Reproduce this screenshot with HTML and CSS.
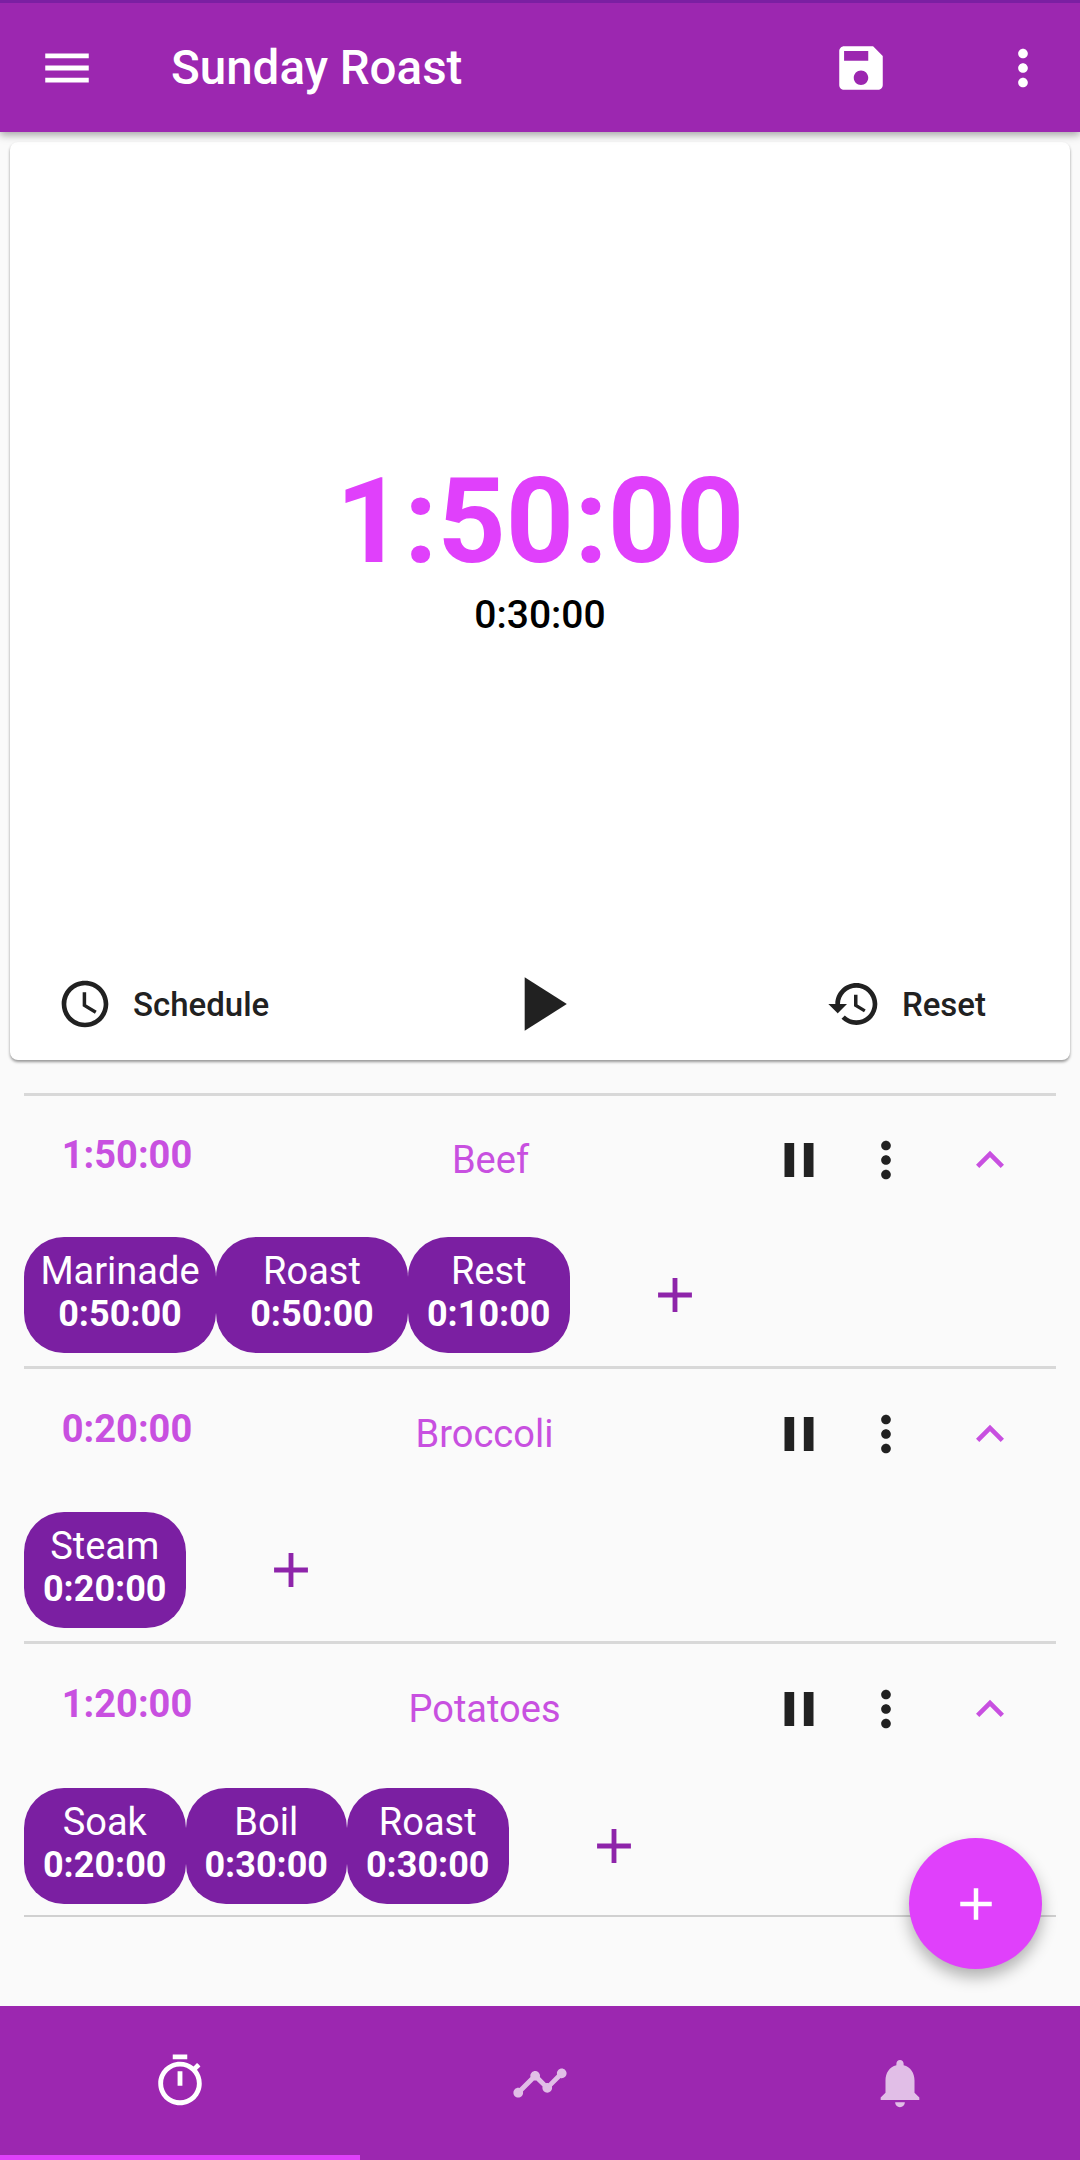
FILE: index.html
```html
<!DOCTYPE html>
<html lang="en">
<head>
    <meta charset="UTF-8">
    <meta name="viewport" content="width=device-width, initial-scale=1.0">
    <title>Sunday Roast</title>
    <link rel="stylesheet" href="styles.css">
</head>
<body>
    <svg class="defs" width="0" height="0">
        <symbol id="i-more" viewBox="0 0 24 24"><path d="M12 8c1.1 0 2-.9 2-2s-.9-2-2-2-2 .9-2 2 .9 2 2 2zm0 2c-1.1 0-2 .9-2 2s.9 2 2 2 2-.9 2-2-.9-2-2-2zm0 6c-1.1 0-2 .9-2 2s.9 2 2 2 2-.9 2-2-.9-2-2-2z"/></symbol>
        <symbol id="i-pause" viewBox="0 0 24 24"><path d="M6 19h4V5H6v14zm8-14v14h4V5h-4z"/></symbol>
        <symbol id="i-up" viewBox="0 0 24 24"><path d="M7.41 15.41 12 10.83l4.59 4.58L18 14l-6-6-6 6z"/></symbol>
        <symbol id="i-plus" viewBox="0 0 24 24"><path d="M19 13h-6v6h-2v-6H5v-2h6V5h2v6h6v2z"/></symbol>
    </svg>

    <!-- App bar -->
    <header class="app-bar">
        <svg class="icon bar-menu" viewBox="0 0 24 24"><path d="M3 18h18v-2H3v2zm0-5h18v-2H3v2zm0-7v2h18V6H3z"/></svg>
        <h1 class="bar-title">Sunday Roast</h1>
        <svg class="icon bar-save" viewBox="0 0 24 24"><path d="M17 3H5c-1.11 0-2 .9-2 2v14c0 1.1.89 2 2 2h14c1.1 0 2-.9 2-2V7l-4-4zm-5 16c-1.66 0-3-1.34-3-3s1.34-3 3-3 3 1.34 3 3-1.34 3-3 3zm3-10H5V5h10v4z"/></svg>
        <svg class="icon bar-more"><use href="#i-more"/></svg>
    </header>

    <!-- Timer card -->
    <section class="card">
        <div class="clock">
            <div class="clock-main">1:50:00</div>
            <div class="clock-sub">0:30:00</div>
        </div>
        <div class="card-actions">
            <div class="action action-left">
                <svg class="icon action-icon" viewBox="0 0 24 24"><path d="M11.99 2C6.47 2 2 6.48 2 12s4.47 10 9.99 10C17.52 22 22 17.52 22 12S17.52 2 11.99 2zM12 20c-4.42 0-8-3.58-8-8s3.58-8 8-8 8 3.58 8 8-3.58 8-8 8zm.5-13H11v6l5.25 3.15.75-1.23-4.5-2.67z"/></svg>
                <span>Schedule</span>
            </div>
            <svg class="icon play" viewBox="0 0 24 24"><path d="M8 5v14l11-7z"/></svg>
            <div class="action action-right">
                <svg class="icon action-icon" viewBox="0 0 24 24"><path d="M13 3c-4.97 0-9 4.03-9 9H1l3.89 3.89.07.14L9 12H6c0-3.87 3.13-7 7-7s7 3.13 7 7-3.13 7-7 7c-1.93 0-3.68-.79-4.94-2.06l-1.42 1.42C8.27 19.99 10.51 21 13 21c4.97 0 9-4.03 9-9s-4.03-9-9-9zm-1 5v5l4.28 2.54.72-1.21-3.5-2.08V8H12z"/></svg>
                <span>Reset</span>
            </div>
        </div>
    </section>

    <!-- Dish list -->
    <main class="dishes">
        <article class="dish dish-first">
            <div class="dish-head">
                <div class="dish-time">1:50:00</div>
                <div class="dish-name dish-name-short">Beef</div>
                <svg class="icon dish-btn"><use href="#i-pause"/></svg>
                <svg class="icon dish-btn"><use href="#i-more"/></svg>
                <svg class="icon dish-toggle"><use href="#i-up"/></svg>
            </div>
            <div class="steps">
                <div class="chip chip-wide"><span>Marinade</span><b>0:50:00</b></div>
                <div class="chip chip-wide"><span>Roast</span><b>0:50:00</b></div>
                <div class="chip"><span>Rest</span><b>0:10:00</b></div>
                <svg class="icon add-step"><use href="#i-plus"/></svg>
            </div>
        </article>

        <article class="dish">
            <div class="dish-head">
                <div class="dish-time">0:20:00</div>
                <div class="dish-name">Broccoli</div>
                <svg class="icon dish-btn"><use href="#i-pause"/></svg>
                <svg class="icon dish-btn"><use href="#i-more"/></svg>
                <svg class="icon dish-toggle"><use href="#i-up"/></svg>
            </div>
            <div class="steps">
                <div class="chip"><span>Steam</span><b>0:20:00</b></div>
                <svg class="icon add-step"><use href="#i-plus"/></svg>
            </div>
        </article>

        <article class="dish dish-last">
            <div class="dish-head">
                <div class="dish-time">1:20:00</div>
                <div class="dish-name">Potatoes</div>
                <svg class="icon dish-btn"><use href="#i-pause"/></svg>
                <svg class="icon dish-btn"><use href="#i-more"/></svg>
                <svg class="icon dish-toggle"><use href="#i-up"/></svg>
            </div>
            <div class="steps">
                <div class="chip"><span>Soak</span><b>0:20:00</b></div>
                <div class="chip"><span>Boil</span><b>0:30:00</b></div>
                <div class="chip"><span>Roast</span><b>0:30:00</b></div>
                <svg class="icon add-step"><use href="#i-plus"/></svg>
            </div>
        </article>
    </main>

    <button class="fab"><svg class="icon fab-icon"><use href="#i-plus"/></svg></button>

    <!-- Bottom tabs -->
    <nav class="tabs">
        <div class="tab tab-active">
            <svg class="icon tab-icon" viewBox="0 0 24 24"><path d="M15 1H9v2h6V1zm-4 13h2V8h-2v6zm8.03-6.61l1.42-1.42c-.43-.51-.9-.99-1.41-1.41l-1.42 1.42C16.07 4.74 14.12 4 12 4c-4.97 0-9 4.03-9 9s4.02 9 9 9 9-4.03 9-9c0-2.12-.74-4.07-1.97-5.61zM12 20c-3.87 0-7-3.13-7-7s3.13-7 7-7 7 3.13 7 7-3.13 7-7 7z"/></svg>
        </div>
        <div class="tab">
            <svg class="icon tab-icon" viewBox="0 0 24 24"><path d="M23 8c0 1.1-.9 2-2 2-.18 0-.35-.02-.51-.07l-3.56 3.55c.05.16.07.34.07.52 0 1.1-.9 2-2 2s-2-.9-2-2c0-.18.02-.36.07-.52l-2.55-2.55c-.16.05-.34.07-.52.07s-.36-.02-.52-.07l-4.55 4.56c.05.16.07.33.07.51 0 1.1-.9 2-2 2s-2-.9-2-2 .9-2 2-2c.18 0 .35.02.51.07l4.56-4.55C8.02 9.36 8 9.18 8 9c0-1.1.9-2 2-2s2 .9 2 2c0 .18-.02.36-.07.52l2.55 2.55c.16-.05.34-.07.52-.07s.36.02.52.07l3.55-3.56C19.02 8.35 19 8.18 19 8c0-1.1.9-2 2-2s2 .9 2 2z"/></svg>
        </div>
        <div class="tab">
            <svg class="icon tab-icon" viewBox="0 0 24 24"><path d="M12 22c1.1 0 2-.9 2-2h-4c0 1.1.89 2 2 2zm6-6v-5c0-3.07-1.64-5.64-4.5-6.32V4c0-.83-.67-1.5-1.5-1.5s-1.5.67-1.5 1.5v.68C7.63 5.36 6 7.92 6 11v5l-2 2v1h16v-1l-2-2z"/></svg>
        </div>
    </nav>
</body>
</html>
```

FILE: styles.css
```css
* { box-sizing: border-box; }
body { font-family: Roboto, "Liberation Sans", sans-serif; margin: 0; width: 1080px; height: 2160px; background: #fafafa; display: flex; flex-direction: column; position: relative; overflow: hidden; }
.defs { position: absolute; }
.icon { display: block; fill: currentColor; flex: none; }

/* App bar */
.app-bar { height: 132px; flex: none; background: #9c27b0; border-top: 3px solid #7b1fa2; color: #fff; display: flex; align-items: center; padding-left: 38px; box-shadow: 0 3px 8px rgba(0, 0, 0, .35); position: relative; z-index: 1; }
.bar-menu { width: 58px; height: 58px; }
.bar-title { font-size: 47.5px; font-weight: 500; margin: 0 0 0 75px; flex: 1; }
.bar-save { width: 58px; height: 58px; }
.bar-more { width: 58px; height: 58px; margin: 0 28px 0 104px; }

/* Timer card */
.card { height: 918px; flex: none; margin: 10px 10px 0; background: #fff; border-radius: 8px; box-shadow: 0 2px 3px rgba(0, 0, 0, .4); display: flex; flex-direction: column; }
.clock { flex: 1; display: flex; flex-direction: column; align-items: center; justify-content: center; padding-top: 10px; }
.clock-main { font-size: 119px; font-weight: 700; line-height: 130px; color: #e040fb; }
.clock-sub { font-size: 39px; font-weight: 500; line-height: 56px; color: #000; }
.card-actions { height: 112px; display: grid; grid-template-columns: 1fr auto 1fr; align-items: center; color: #212121; font-size: 33px; font-weight: 500; padding: 0 47px; }
.action { display: flex; align-items: center; }
.action-right { justify-content: flex-end; padding-right: 37px; }
.action-icon { width: 56px; height: 56px; margin-right: 20px; }
.play { width: 92px; height: 92px; }

/* Dish list */
.dishes { flex: 1; padding: 33px 24px 0; }
.dish { border-bottom: 3px solid #d8d8d8; height: 275px; }
.dish-first { border-top: 3px solid #d8d8d8; height: 276px; }
.dish-last { border-bottom-width: 2px; border-bottom-color: #d0d0d0; height: 273px; }
.dish-head { height: 143px; display: grid; grid-template-columns: 206px 1fr 87px 87px 127px; align-items: center; justify-items: center; padding-bottom: 14px; }
.dish-first .dish-head { height: 141px; padding-bottom: 14px; }
.dish-last .dish-head { height: 144px; }
.dish-time { font-size: 38px; font-weight: 700; color: #c850e0; margin-bottom: 10px; }
.dish-name { font-size: 38px; color: #c850e0; justify-self: stretch; text-align: center; padding-right: 16px; }
.dish-name-short { padding-right: 4px; }
.dish-btn { width: 58px; height: 58px; color: #212121; }
.dish-toggle { width: 56px; height: 56px; color: #c850e0; margin-right: 5px; }

.steps { display: flex; align-items: center; }
.chip { width: 161.5px; height: 116px; border-radius: 40px; background: #7b1fa2; color: #fff; font-size: 36px; line-height: 43px; display: flex; flex-direction: column; align-items: center; justify-content: center; padding-bottom: 4px; }
.chip span { font-size: 38px; }
.chip b { font-weight: 700; }
.chip-wide { width: 192px; }
.add-step { width: 58px; height: 58px; color: #8e24aa; margin-left: 76px; }

/* Floating add button */
.fab { position: absolute; left: 909px; top: 1838px; width: 133px; height: 131px; border: 0; padding: 0; border-radius: 50%; background: #e040fb; color: #fff; box-shadow: 0 8px 16px rgba(0, 0, 0, .3); display: flex; align-items: center; justify-content: center; }
.fab-icon { width: 54px; height: 54px; }

/* Bottom tabs */
.tabs { height: 154px; flex: none; background: #9c27b0; display: flex; }
.tab { flex: 1; display: flex; align-items: center; justify-content: center; color: rgba(255, 255, 255, .7); }
.tab-active { color: #fff; border-bottom: 5px solid #e040fb; }
.tab-icon { width: 58px; height: 58px; }
```
